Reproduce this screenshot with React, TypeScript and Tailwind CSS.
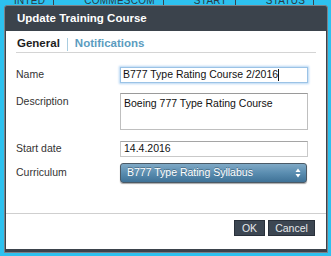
import React from 'react';

const bgCols = ['inted', 'Commescom', 'START DATE', 'STATUS', 'MODIFIED'];

export default function App(): React.JSX.Element {
  return (
    <div className="w-[331px] h-[256px] bg-[#2dc1ef] overflow-hidden flex flex-col font-['Liberation_Sans',sans-serif]">
      {/* table header peeking behind the dialog */}
      <div className="h-[5px] overflow-hidden flex text-[10px] text-[#2a3a44] tracking-wide">
        <div className="flex -mt-[7px] pl-[14px] gap-[30px] uppercase">
          {bgCols.map((c) => (
            <span key={c} className="border-r border-[#3b434c] pr-2">{c}</span>
          ))}
        </div>
      </div>

      <div className="ml-[4px] mr-[3px] h-[248px] bg-[#3b434c] border border-[#7c8187] rounded-t-[3px] flex flex-col">
        <div className="h-[25px] flex items-center pl-[12px] text-white font-bold text-[11.5px]">
          Update Training Course
        </div>

        <div className="flex-1 mx-px mb-[3px] bg-white flex flex-col">
          <div className="mx-[10px] mt-[5px] h-[17px] border-b border-[#d4d4d4] flex items-center text-[11.5px] font-bold">
            <span className="text-[#1d1d1d] pl-px">General</span>
            <span className="mx-[7px] w-px h-[13px] bg-[#a9cde0]" />
            <span className="text-[#5b9cc0]">Notifications</span>
          </div>

          <div className="px-[10px] text-[10.5px] text-[#333]">
            <div className="flex items-center mt-[14px] h-[16px]">
              <span className="w-[104px]">Name</span>
              <div className="w-[188px] h-[16px] border border-[#9bc3e6] shadow-[0_0_2px_1px_#b7d7f3] flex items-center px-[2px] text-[#111]">
                B777 Type Rating Course 2/2016<span className="w-px h-[12px] bg-[#111]" />
              </div>
            </div>

            <div className="flex mt-[10px]">
              <span className="w-[104px] pt-px">Description</span>
              <div className="w-[188px] h-[37px] border border-[#bfbfbf] border-t-[#9a9a9a] px-[3px] pt-[2px] text-[#111] leading-[14px]">
                Boeing 777 Type Rating Course
              </div>
            </div>

            <div className="flex items-center mt-[11px] h-[16px]">
              <span className="w-[104px]">Start date</span>
              <div className="w-[188px] h-[16px] border border-[#c9c9c9] border-t-[#a5a5a5] flex items-center px-[3px] text-[#111]">
                14.4.2016
              </div>
            </div>

            <div className="flex items-center mt-[6px] h-[20px]">
              <span className="w-[104px]">Curriculum</span>
              <div className="w-[187px] h-[20px] rounded-[3px] border border-[#4b5a66] bg-gradient-to-b from-[#7fa9c6] via-[#5a8db0] to-[#3f7297] flex items-center justify-between pl-[6px] pr-[5px] text-white shadow-[0_1px_1px_rgba(0,0,0,0.35)]">
                <span className="[text-shadow:0_-1px_0_rgba(0,0,0,0.3)]">B777 Type Rating Syllabus</span>
                <svg width="6" height="10" viewBox="0 0 6 10">
                  <path d="M3 0.5 L5.5 4 H0.5 Z" fill="#fff" />
                  <path d="M3 9.5 L5.5 6 H0.5 Z" fill="#fff" />
                </svg>
              </div>
            </div>
          </div>

          <div className="mt-auto border-t border-[#cfcfcf] h-[36px] flex items-start justify-end pr-[11px] pt-[6px] gap-[3px]">
            <button className="w-[31px] h-[16px] bg-[#3c4652] border border-[#29303a] text-[#e6e9ec] text-[10.5px] leading-none">
              OK
            </button>
            <button className="w-[47px] h-[16px] bg-[#3c4652] border border-[#29303a] text-[#e6e9ec] text-[10.5px] leading-none">
              Cancel
            </button>
          </div>
        </div>
      </div>
    </div>
  );
}
